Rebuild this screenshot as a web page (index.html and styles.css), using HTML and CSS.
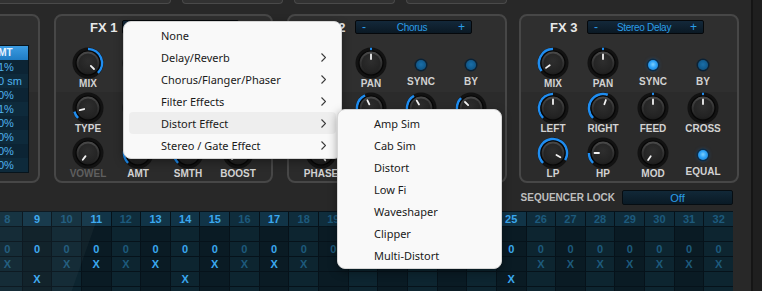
FILE: index.html
```html
<!DOCTYPE html>
<html lang="en">
<head>
    <meta charset="UTF-8">
    <meta name="viewport" content="width=device-width, initial-scale=1.0">
    <title>FX Rack</title>
    <link rel="stylesheet" href="styles.css">
</head>
<body>
    <svg class="defs" width="0" height="0">
        <defs>
            <linearGradient id="kbody" x1="0" y1="0" x2="0" y2="1">
                <stop offset="0" stop-color="#4a4a4a"/>
                <stop offset="1" stop-color="#1b1b1b"/>
            </linearGradient>
            <radialGradient id="kcap" cx="0.5" cy="0.4" r="0.6">
                <stop offset="0" stop-color="#2e2e2e"/>
                <stop offset="1" stop-color="#222"/>
            </radialGradient>
        </defs>
    </svg>
    <div class="app">
        <div class="main">
            <div class="tabs">
                <div class="tab tab-wide"></div>
                <div class="tab"></div>
                <div class="tab"></div>
                <div class="tab"></div>
            </div>

            <div class="panels">
                <section class="panel side">
                    <div class="mod-list">
                        <div class="mod-head">AMT</div>
                        <div class="mod-row">1%</div>
                        <div class="mod-row">0 sm</div>
                        <div class="mod-row">0%</div>
                        <div class="mod-row">1%</div>
                        <div class="mod-row">0%</div>
                        <div class="mod-row">0%</div>
                        <div class="mod-row">0%</div>
                        <div class="mod-row">0%</div>
                    </div>
                </section>

                <section class="panel fx fx1">
                    <div class="fx-head">
                        <span class="fx-title">FX 1</span>
                        <div class="picker"><span>-</span><span class="picker-name">Formant</span><span>+</span></div>
                    </div>
                    <div class="controls">
                        <div class="ctl"><div class="knob" data-v="135" data-arc="0,135"></div><span class="ctl-label">MIX</span></div>
                        <div class="ctl"><div class="knob" data-v="0"></div><span class="ctl-label">FREQ</span></div>
                        <div class="ctl"><div class="knob" data-v="-40" data-arc="-135,-40"></div><span class="ctl-label">RES</span></div>
                        <div class="ctl"><div class="knob" data-v="-135"></div><span class="ctl-label">DRIVE</span></div>

                        <div class="ctl"><div class="knob" data-v="-105" data-arc="-135,-105"></div><span class="ctl-label">TYPE</span></div>
                        <div class="ctl"><div class="knob" data-v="0"></div><span class="ctl-label">RATE</span></div>
                        <div class="ctl"><div class="knob" data-v="0"></div><span class="ctl-label">DEPTH</span></div>
                        <div class="ctl"><div class="knob" data-v="0"></div><span class="ctl-label">SPRD</span></div>

                        <div class="ctl"><div class="knob" data-v="-142"></div><span class="ctl-label off">VOWEL</span></div>
                        <div class="ctl"><div class="knob" data-v="-40" data-arc="-135,-40"></div><span class="ctl-label">AMT</span></div>
                        <div class="ctl"><div class="knob" data-v="-30" data-arc="-135,-30"></div><span class="ctl-label">SMTH</span></div>
                        <div class="ctl"><div class="knob" data-v="-135"></div><span class="ctl-label">BOOST</span></div>
                    </div>
                </section>

                <section class="panel fx fx2">
                    <div class="fx-head">
                        <span class="fx-title">FX 2</span>
                        <div class="picker"><span>-</span><span class="picker-name">Chorus</span><span>+</span></div>
                    </div>
                    <div class="controls">
                        <div class="ctl"><div class="knob" data-v="90" data-arc="-135,90"></div><span class="ctl-label">MIX</span></div>
                        <div class="ctl"><div class="knob" data-v="0" data-arc="-4,4"></div><span class="ctl-label">PAN</span></div>
                        <div class="ctl"><div class="led"></div><span class="ctl-label">SYNC</span></div>
                        <div class="ctl"><div class="led"></div><span class="ctl-label">BY</span></div>

                        <div class="ctl"><div class="knob" data-v="-60" data-arc="-135,-60"></div><span class="ctl-label">RATE</span></div>
                        <div class="ctl"><div class="knob" data-v="-25" data-arc="-135,-25"></div><span class="ctl-label">DEPTH</span></div>
                        <div class="ctl"><div class="knob" data-v="-30" data-arc="-135,-30"></div><span class="ctl-label">DELAY</span></div>
                        <div class="ctl"><div class="knob" data-v="-45" data-arc="-135,-45"></div><span class="ctl-label">FEED</span></div>

                        <div class="ctl"><div class="knob" data-v="150"></div><span class="ctl-label">PHASE</span></div>
                        <div class="ctl"><div class="knob" data-v="0"></div><span class="ctl-label">WIDTH</span></div>
                        <div class="ctl"><div class="knob" data-v="0"></div><span class="ctl-label">LP</span></div>
                        <div class="ctl"><div class="knob" data-v="0"></div><span class="ctl-label">HP</span></div>
                    </div>
                </section>

                <section class="panel fx fx3">
                    <div class="fx-head">
                        <span class="fx-title">FX 3</span>
                        <div class="picker"><span>-</span><span class="picker-name">Stereo Delay</span><span>+</span></div>
                    </div>
                    <div class="controls">
                        <div class="ctl"><div class="knob" data-v="-125" data-arc="-125,0"></div><span class="ctl-label">MIX</span></div>
                        <div class="ctl"><div class="knob" data-v="0" data-arc="-4,4"></div><span class="ctl-label">PAN</span></div>
                        <div class="ctl"><div class="led on"></div><span class="ctl-label">SYNC</span></div>
                        <div class="ctl"><div class="led"></div><span class="ctl-label">BY</span></div>

                        <div class="ctl"><div class="knob" data-v="0" data-arc="-135,0"></div><span class="ctl-label">LEFT</span></div>
                        <div class="ctl"><div class="knob" data-v="20" data-arc="-135,20"></div><span class="ctl-label">RIGHT</span></div>
                        <div class="ctl"><div class="knob" data-v="0" data-arc="-4,4"></div><span class="ctl-label">FEED</span></div>
                        <div class="ctl"><div class="knob" data-v="0" data-arc="-4,4"></div><span class="ctl-label">CROSS</span></div>

                        <div class="ctl"><div class="knob" data-v="120" data-arc="-135,120"></div><span class="ctl-label">LP</span></div>
                        <div class="ctl"><div class="knob" data-v="-90" data-arc="-135,-90"></div><span class="ctl-label">HP</span></div>
                        <div class="ctl"><div class="knob" data-v="-145"></div><span class="ctl-label">MOD</span></div>
                        <div class="ctl"><div class="led on"></div><span class="ctl-label">EQUAL</span></div>
                    </div>
                </section>
            </div>

            <div class="lock-row">
                <span class="lock-label">SEQUENCER LOCK</span>
                <div class="lock-btn">Off</div>
            </div>

            <div class="seq" id="seq"></div>
        </div>
        <div class="scroll"></div>

        <div class="menu menu-main">
            <div class="menu-item">None</div>
            <div class="menu-item">Delay/Reverb<svg class="chev" viewBox="0 0 5 9" width="5" height="9"><path d="M0.5 0.5 L4.5 4.5 L0.5 8.5"/></svg></div>
            <div class="menu-item">Chorus/Flanger/Phaser<svg class="chev" viewBox="0 0 5 9" width="5" height="9"><path d="M0.5 0.5 L4.5 4.5 L0.5 8.5"/></svg></div>
            <div class="menu-item">Filter Effects<svg class="chev" viewBox="0 0 5 9" width="5" height="9"><path d="M0.5 0.5 L4.5 4.5 L0.5 8.5"/></svg></div>
            <div class="menu-item hover">Distort Effect<svg class="chev" viewBox="0 0 5 9" width="5" height="9"><path d="M0.5 0.5 L4.5 4.5 L0.5 8.5"/></svg></div>
            <div class="menu-item">Stereo / Gate Effect<svg class="chev" viewBox="0 0 5 9" width="5" height="9"><path d="M0.5 0.5 L4.5 4.5 L0.5 8.5"/></svg></div>
        </div>

        <div class="menu menu-sub">
            <div class="menu-item">Amp Sim</div>
            <div class="menu-item">Cab Sim</div>
            <div class="menu-item">Distort</div>
            <div class="menu-item">Low Fi</div>
            <div class="menu-item">Waveshaper</div>
            <div class="menu-item">Clipper</div>
            <div class="menu-item">Multi-Distort</div>
        </div>
    </div>
    <script>
function pt(a, r) {
    const t = a * Math.PI / 180;
    return [(16 + r * Math.sin(t)).toFixed(2), (16 - r * Math.cos(t)).toFixed(2)];
}

document.querySelectorAll('.knob').forEach(k => {
    const v = parseFloat(k.dataset.v);
    let arc = '';
    if (k.dataset.arc) {
        const [a, b] = k.dataset.arc.split(',').map(Number);
        arc = `<path class="knob-arc" d="M${pt(a, 14)} A14 14 0 ${b - a > 180 ? 1 : 0} 1 ${pt(b, 14)}"/>`;
    }
    const p1 = pt(v, 4), p2 = pt(v, 8.5);
    k.innerHTML = `<svg viewBox="0 0 32 32" width="32" height="32">
        <circle cx="16" cy="16" r="15.5" fill="#121212"/>
        ${arc}
        <circle cx="16" cy="16" r="12" fill="url(#kbody)" stroke="#060606" stroke-width="1.2"/>
        <circle cx="16" cy="16" r="9.5" fill="url(#kcap)"/>
        <line x1="${p1[0]}" y1="${p1[1]}" x2="${p2[0]}" y2="${p2[1]}" class="knob-ptr"/>
    </svg>`;
});

// sequencer steps 8..32
const active = [9, 11, 13, 14, 15, 17, 25];
const rows = [
    n => String(n),
    () => '',
    () => '0',
    n => [9, 14, 19, 25].includes(n) ? '' : 'X',
    n => [9, 14, 25].includes(n) ? 'X' : '',
    () => ''
];
const seq = document.getElementById('seq');
rows.forEach((row, r) => {
    for (let n = 8; n <= 32; n++) {
        const cell = document.createElement('div');
        cell.className = 'step' + (r === 0 ? ' head' : '') + (n % 2 ? ' odd' : '') + (active.includes(n) ? ' on' : '');
        cell.textContent = row(n);
        seq.appendChild(cell);
    }
});
    </script>
</body>
</html>
```

FILE: styles.css
```css
* {
    box-sizing: border-box;
}

body {
    margin: 0;
    background: #282828;
    font-family: "Liberation Sans", Arial, sans-serif;
    overflow: hidden;
}

.defs {
    position: absolute;
}

.app {
    position: relative;
    display: flex;
    width: 762px;
    height: 291px;
    overflow: hidden;
}

.main {
    width: 751px;
    flex: none;
}

.scroll {
    flex: 1;
    background: #1f1f1f;
    border-left: 2px solid #151515;
}

/* tabs of the row above */
.tabs {
    display: flex;
    gap: 11px;
    height: 4px;
    margin-left: -6px;
}
.tab {
    width: 101px;
    height: 4px;
    border: 1px solid #4a4a4a;
    border-top: 0;
    border-radius: 0 0 5px 5px;
    background: #323232;
}
.tab-wide {
    width: 177px;
}

/* effect panels */
.panels {
    display: flex;
    gap: 14px;
    margin-top: 10px;
    height: 169px;
}
.panel {
    flex: none;
    border: 2px solid #474747;
    border-radius: 8px;
    background: linear-gradient(#2f2f2f 0, #2f2f2f 76px, #2b2b2b 76px);
}
.side {
    width: 60px;
    margin-left: -20px;
    padding: 29px 9px 0 0;
}
.fx {
    width: 220px;
    padding: 4px 0 0 7px;
}
.fx1 {
    width: 219px;
}
.fx1 .fx-title {
    padding-left: 5px;
}
.fx3 {
    margin-left: -2px;
}

.mod-list {
    border: 1px solid #07141c;
    border-left: 0;
    background: #0b2230;
}
.mod-head {
    height: 14px;
    line-height: 14px;
    padding-left: 9px;
    font-size: 10px;
    font-weight: bold;
    color: #e6f3ff;
    background: linear-gradient(#3c9ce2, #1f7cc4);
}
.mod-row {
    height: 14px;
    line-height: 14px;
    padding-left: 16px;
    font-size: 11px;
    color: #4fb2ee;
    background: #0c2434;
}
.mod-row:nth-child(odd) {
    background: #0e2a3b;
}

.fx-head {
    display: flex;
    align-items: center;
    gap: 7px;
    height: 14px;
    padding-left: 22px;
}
.fx-title {
    width: 30px;
    font-size: 13px;
    font-weight: bold;
    color: #e8e8e8;
    white-space: nowrap;
}
.picker {
    display: flex;
    justify-content: space-between;
    align-items: center;
    width: 117px;
    height: 14px;
    padding: 0 6px;
    border: 1px solid #05080b;
    border-radius: 2px;
    background: linear-gradient(#13283a, #0b1924);
    color: #2a9ee8;
    font-size: 10px;
    letter-spacing: -0.3px;
}
.picker span:first-child,
.picker span:last-child {
    font-size: 12px;
    letter-spacing: 0;
}

.controls {
    display: grid;
    grid-template-columns: repeat(4, 50px);
    row-gap: 3px;
    margin-top: 13px;
}
.ctl {
    display: flex;
    flex-direction: column;
    align-items: center;
    height: 42px;
}
.knob {
    width: 32px;
    height: 32px;
}
.knob svg {
    display: block;
}
.knob-arc {
    fill: none;
    stroke: #1f8df0;
    stroke-width: 2.6;
}
.knob-ptr {
    stroke: #f2f2f2;
    stroke-width: 1.8;
    stroke-linecap: round;
}
.ctl-label {
    font-size: 10px;
    font-weight: bold;
    line-height: 10px;
    color: #d2d2d2;
    white-space: nowrap;
}
.ctl-label.off {
    color: #5f5f5f;
}

.led {
    width: 10px;
    height: 10px;
    margin: 13px 0 7px;
    border-radius: 50%;
    background: radial-gradient(circle at 50% 45%, #1b6fa8 0, #0e5587 70%, #0a3f66 100%);
    box-shadow: 0 0 0 1.5px #0a2236;
}
.led.on {
    background: radial-gradient(circle at 50% 45%, #7ad0ff 0, #2ea2f6 45%, #1578c8 100%);
    box-shadow: 0 0 0 1.5px #0b2c48, 0 0 4px rgba(40, 150, 255, 0.5);
}

/* sequencer lock */
.lock-row {
    display: flex;
    justify-content: flex-end;
    align-items: center;
    gap: 7px;
    height: 15px;
    margin-top: 7px;
    padding-right: 18px;
}
.lock-label {
    font-size: 10px;
    font-weight: bold;
    color: #bfbfbf;
}
.lock-btn {
    width: 111px;
    height: 15px;
    line-height: 14px;
    text-align: center;
    font-size: 11px;
    color: #2a9ee8;
    border: 1px solid #060d12;
    border-radius: 2px;
    background: linear-gradient(#112838, #0a1a25);
}

/* step grid */
.seq {
    position: relative;
    display: grid;
    grid-template-columns: repeat(25, 1fr);
    grid-auto-rows: 14px;
    gap: 1px;
    width: 740px;
    height: 90px;
    margin: 6px 0 0 -7px;
    padding-top: 1px;
    background: #06121a;
    overflow: hidden;
}
.seq::after {
    content: "";
    position: absolute;
    left: 0;
    top: 0;
    bottom: 0;
    width: 107px;
    background: rgba(255, 255, 255, 0.035);
    transform: skewX(-19.5deg);
    transform-origin: top left;
    pointer-events: none;
}
.step {
    display: flex;
    align-items: center;
    justify-content: center;
    font-size: 11px;
    font-weight: bold;
    color: #1d5a7c;
    background: #0d2530;
}
.step.odd {
    background: #0a1b24;
}
.step.head {
    background: #0f2d3c;
}
.step.head.on {
    background: #113447;
}
.step.on {
    color: #3aa8ef;
}

/* popup menus */
.menu {
    position: absolute;
    padding: 2px 5px;
    border: 1px solid #d6d6d6;
    border-radius: 8px;
    background: #f9f9f9;
    box-shadow: 0 3px 10px rgba(0, 0, 0, 0.35);
    font-family: "Noto Sans", "Open Sans", sans-serif;
    font-size: 11px;
    color: #1a1a1a;
}
.menu-main {
    left: 123px;
    top: 21px;
    width: 219px;
}
.menu-sub {
    left: 337px;
    top: 109px;
    width: 165px;
}
.menu-item {
    display: flex;
    align-items: center;
    height: 22px;
    padding-left: 32px;
    border-radius: 4px;
    white-space: nowrap;
}
.menu-sub .menu-item {
    padding-left: 31px;
}
.menu-item.hover {
    background: #eeeeee;
}
.chev {
    margin-left: auto;
    margin-right: 10px;
    fill: none;
    stroke: #3a3a3a;
    stroke-width: 1.1;
}
```
